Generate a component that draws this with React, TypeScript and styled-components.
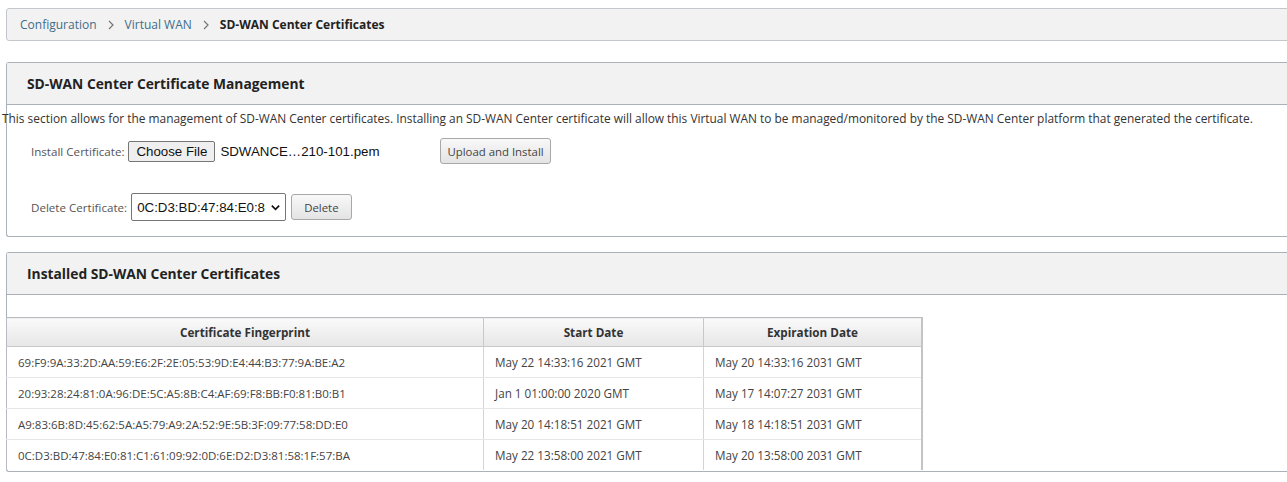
import styled, { createGlobalStyle } from "styled-components";

const GlobalStyle = createGlobalStyle`
  html, body {
    margin: 0;
    padding: 0;
    background: #ffffff;
    overflow: hidden;
  }
  body {
    font-family: "Open Sans", "Noto Sans", sans-serif;
    font-size: 12px;
    color: #333;
  }
`;

const Page = styled.div`
  width: 1300px;
  padding: 8px 0 0 6px;
  box-sizing: border-box;
`;

const Breadcrumb = styled.div`
  display: flex;
  align-items: center;
  gap: 10px;
  height: 33px;
  padding: 0 13px;
  background: #f2f2f2;
  border: 1px solid #c3c7cc;
  border-radius: 3px;
  box-sizing: border-box;
  font-size: 12px;
`;

const Crumb = styled.span<{ $current?: boolean }>`
  color: ${(p) => (p.$current ? "#222" : "#3e6d8a")};
  font-weight: ${(p) => (p.$current ? 700 : 400)};
`;

const Sep = styled.span`
  display: flex;
  align-items: center;
`;

const Section = styled.section<{ $top: number }>`
  margin-top: ${(p) => p.$top}px;
  border: 1px solid #aab1b8;
  border-radius: 3px;
  border-right: none;
`;

const SectionHead = styled.div`
  height: 41px;
  display: flex;
  align-items: center;
  padding-left: 20px;
  background: #f2f2f2;
  border-bottom: 1px solid #aab1b8;
  font-size: 13.8px;
  font-weight: 700;
  color: #222;
`;

const Desc = styled.p`
  margin: 5px 0 0 -5px;
  white-space: nowrap;
  font-size: 11.9px;
  color: #333;
`;

const FormRow = styled.div<{ $top: number }>`
  display: flex;
  align-items: center;
  margin-top: ${(p) => p.$top}px;
  padding-left: 24px;
  height: 28px;
`;

const Label = styled.span`
  color: #555;
  font-size: 11.6px;
  margin-right: 4px;
`;

const NativeBtn = styled.button`
  font-family: "Liberation Sans", Arial, sans-serif;
  font-size: 13.3px;
  height: 21px;
  padding: 0 7px;
  color: #111;
  background: #efefef;
  border: 1px solid #767676;
  border-radius: 2px;
`;

const FileName = styled.span`
  font-family: "Liberation Sans", Arial, sans-serif;
  font-size: 13.3px;
  color: #111;
  margin-left: 5px;
  width: 215px;
`;

const PlainBtn = styled.button<{ $h: number }>`
  font-family: "Open Sans", "Noto Sans", sans-serif;
  font-size: 11.4px;
  height: ${(p) => p.$h}px;
  padding: 0 6px;
  color: #444;
  background: linear-gradient(#f8f8f8, #e4e4e4);
  border: 1px solid #a8a8a8;
  border-radius: 3px;
  margin-left: 5px;
`;

const DeleteBtn = styled(PlainBtn)`
  padding: 0 12px;
`;

const Select = styled.div`
  display: flex;
  align-items: center;
  justify-content: space-between;
  width: 155px;
  height: 28px;
  box-sizing: border-box;
  padding: 0 4px 0 5px;
  border: 1px solid #767676;
  border-radius: 2px;
  font-family: "Liberation Sans", Arial, sans-serif;
  font-size: 13.3px;
  color: #111;
  background: #fff;
`;

const Spacer = styled.div<{ $h: number }>`
  height: ${(p) => p.$h}px;
`;

const Table = styled.table`
  border-collapse: collapse;
  width: 912px;
  margin-left: -1px;
  border-top: 1px solid #b8bcc0;
  border-left: 1px solid #b8bcc0;
  table-layout: fixed;
`;

const Th = styled.th<{ $w: number }>`
  width: ${(p) => p.$w}px;
  height: 28px;
  background: linear-gradient(#fafafa, #e6e6e6);
  border-right: 1px solid #c8c8c8;
  border-bottom: 1px solid #c8c8c8;
  font-weight: 700;
  font-size: 11.7px;
  color: #333;
  padding: 0;
  &:last-child {
    border-right: 2px solid #c4c4c4;
  }
`;

const Td = styled.td`
  height: 30px;
  padding: 0 0 0 11px;
  border-right: 1px solid #d4d4d4;
  border-bottom: 1px solid #e6e6e6;
  color: #444;
  font-size: 11.7px;
  white-space: nowrap;
  &:first-child {
    font-size: 11.5px;
  }
  &:last-child {
    border-right: 2px solid #c4c4c4;
  }
  tr:last-child & {
    border-bottom: none;
  }
`;

const Caret = () => (
  <svg width="11" height="11" viewBox="0 0 12 12">
    <path d="M2 4 L6 8 L10 4" fill="none" stroke="#111" strokeWidth="1.8" />
  </svg>
);

const Arrow = () => (
  <Sep>
    <svg width="8" height="10" viewBox="0 0 8 10">
      <path d="M2 1 L6 5 L2 9" fill="none" stroke="#777" strokeWidth="1.2" />
    </svg>
  </Sep>
);

const certs = [
  ["69:F9:9A:33:2D:AA:59:E6:2F:2E:05:53:9D:E4:44:B3:77:9A:BE:A2", "May 22 14:33:16 2021 GMT", "May 20 14:33:16 2031 GMT"],
  ["20:93:28:24:81:0A:96:DE:5C:A5:8B:C4:AF:69:F8:BB:F0:81:B0:B1", "Jan 1 01:00:00 2020 GMT", "May 17 14:07:27 2031 GMT"],
  ["A9:83:6B:8D:45:62:5A:A5:79:A9:2A:52:9E:5B:3F:09:77:58:DD:E0", "May 20 14:18:51 2021 GMT", "May 18 14:18:51 2031 GMT"],
  ["0C:D3:BD:47:84:E0:81:C1:61:09:92:0D:6E:D2:D3:81:58:1F:57:BA", "May 22 13:58:00 2021 GMT", "May 20 13:58:00 2031 GMT"],
];

export default function App() {
  return (
    <Page>
      <GlobalStyle />
      <Breadcrumb>
        <Crumb>Configuration</Crumb>
        <Arrow />
        <Crumb>Virtual WAN</Crumb>
        <Arrow />
        <Crumb $current>SD-WAN Center Certificates</Crumb>
      </Breadcrumb>

      <Section $top={21}>
        <SectionHead>SD-WAN Center Certificate Management</SectionHead>
        <Desc>
          This section allows for the management of SD-WAN Center certificates. Installing an SD-WAN Center certificate
          will allow this Virtual WAN to be managed/monitored by the SD-WAN Center platform that generated the certificate.
        </Desc>
        <FormRow $top={11}>
          <Label>Install Certificate:</Label>
          <NativeBtn>Choose File</NativeBtn>
          <FileName>SDWANCE…210-101.pem</FileName>
          <PlainBtn $h={26}>Upload and Install</PlainBtn>
        </FormRow>
        <FormRow $top={28}>
          <Label>Delete Certificate:</Label>
          <Select>
            <span>0C:D3:BD:47:84:E0:8</span>
            <Caret />
          </Select>
          <DeleteBtn $h={26}>Delete</DeleteBtn>
        </FormRow>
        <Spacer $h={15} />
      </Section>

      <Section $top={15}>
        <SectionHead>Installed SD-WAN Center Certificates</SectionHead>
        <Spacer $h={22} />
        <Table>
          <thead>
            <tr>
              <Th $w={476}>Certificate Fingerprint</Th>
              <Th $w={219}>Start Date</Th>
              <Th $w={217}>Expiration Date</Th>
            </tr>
          </thead>
          <tbody>
            {certs.map((c) => (
              <tr key={c[0]}>
                <Td>{c[0]}</Td>
                <Td>{c[1]}</Td>
                <Td>{c[2]}</Td>
              </tr>
            ))}
          </tbody>
        </Table>
        <Spacer $h={1} />
      </Section>
    </Page>
  );
}
